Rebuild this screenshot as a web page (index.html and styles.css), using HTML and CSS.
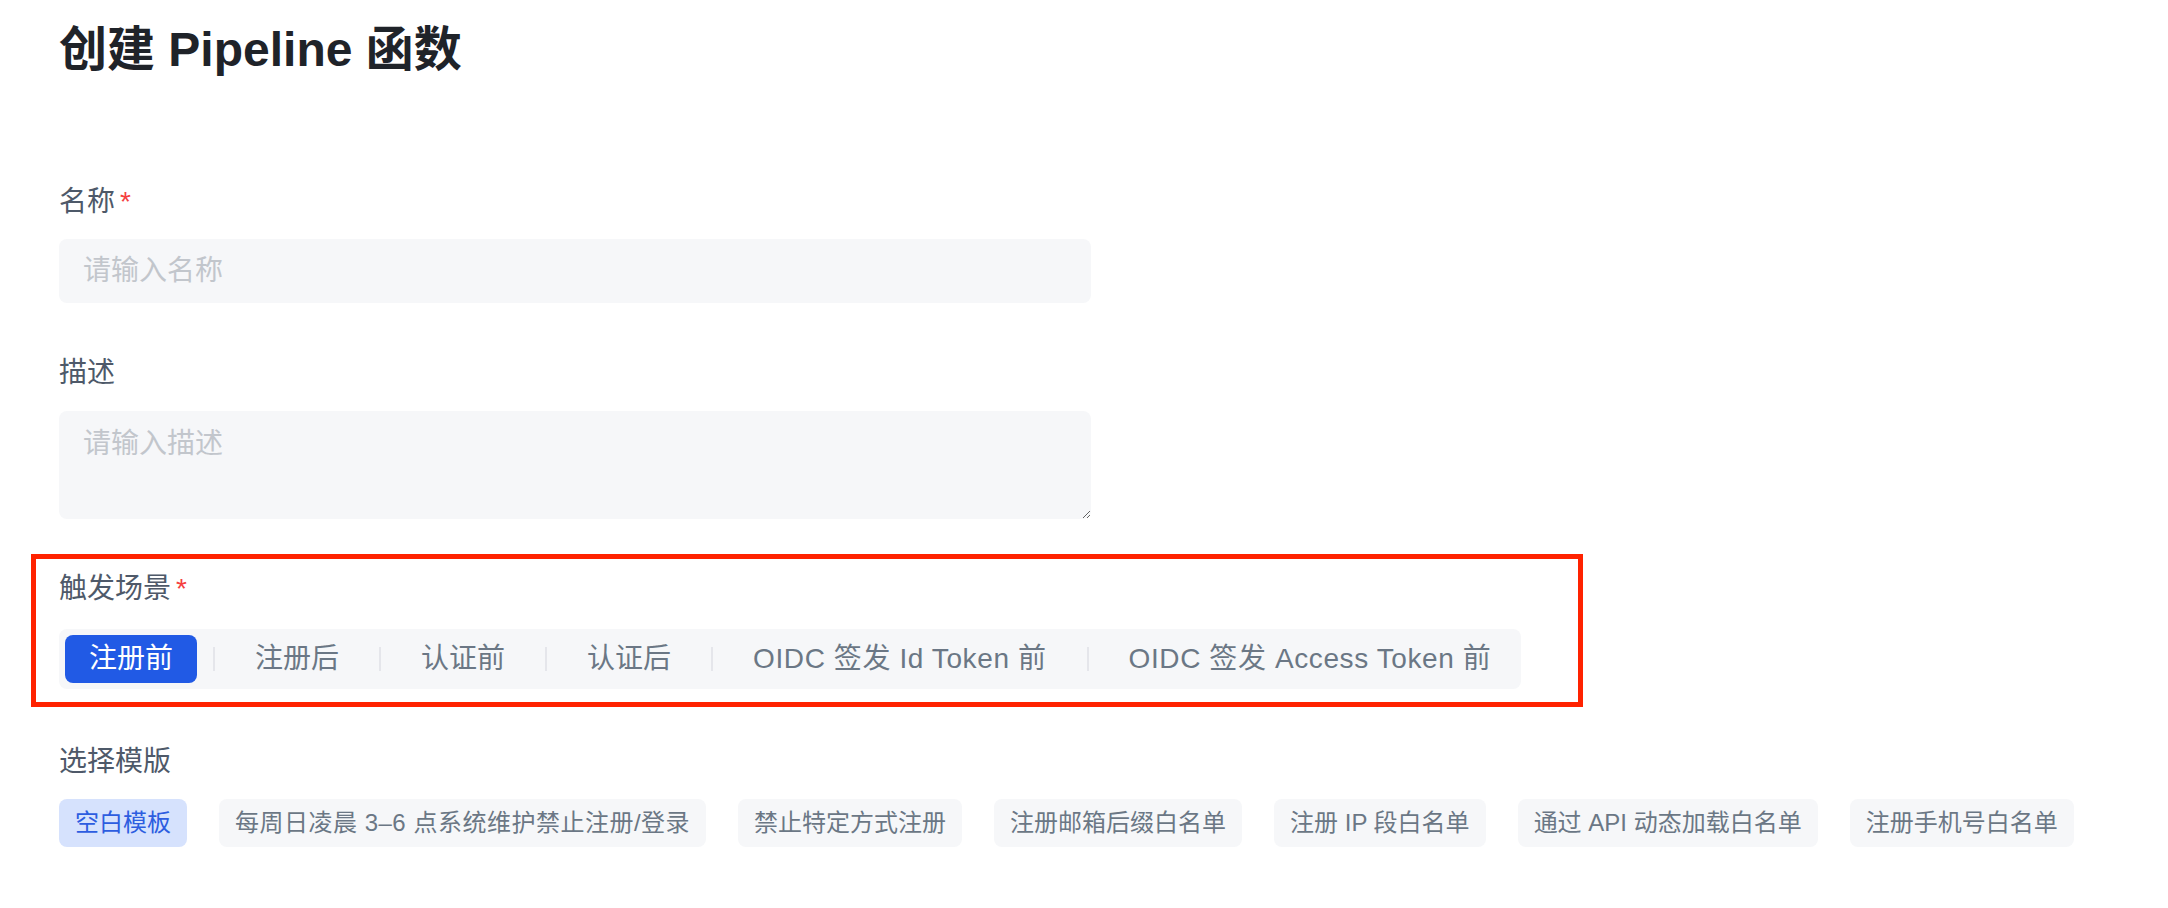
FILE: index.html
```html
<!DOCTYPE html>
<html lang="zh-CN">
<head>
<meta charset="utf-8">
<title>创建 Pipeline 函数</title>
<link rel="stylesheet" href="styles.css">
</head>
<body>
<div class="page">
  <h1 class="title">创建 Pipeline 函数</h1>
  <form class="form">
    <div class="field">
      <label class="label">名称<span class="req">*</span></label>
      <input class="input" type="text" placeholder="请输入名称">
    </div>
    <div class="field field-desc">
      <label class="label">描述</label>
      <textarea class="textarea" placeholder="请输入描述"></textarea>
    </div>
    <div class="highlight">
      <div class="field">
        <label class="label label-trigger">触发场景<span class="req">*</span></label>
        <div class="segmented">
          <div class="seg-item active">注册前</div>
          <div class="seg-sep"></div>
          <div class="seg-item">注册后</div>
          <div class="seg-sep"></div>
          <div class="seg-item">认证前</div>
          <div class="seg-sep"></div>
          <div class="seg-item">认证后</div>
          <div class="seg-sep"></div>
          <div class="seg-item latin">OIDC 签发 Id Token 前</div>
          <div class="seg-sep"></div>
          <div class="seg-item latin">OIDC 签发 Access Token 前</div>
        </div>
      </div>
    </div>
    <div class="field field-template">
      <label class="label">选择模版</label>
      <div class="tags">
        <span class="tag active">空白模板</span>
        <span class="tag tag-wide">每周日凌晨 3–6 点系统维护禁止注册/登录</span>
        <span class="tag">禁止特定方式注册</span>
        <span class="tag">注册邮箱后缀白名单</span>
        <span class="tag">注册 IP 段白名单</span>
        <span class="tag">通过 API 动态加载白名单</span>
        <span class="tag">注册手机号白名单</span>
      </div>
    </div>
  </form>
</div>
</body>
</html>
```
FILE: styles.css
```css
* {
  box-sizing: border-box;
}

html, body {
  margin: 0;
  padding: 0;
  background: #ffffff;
}

body {
  font-family: "Liberation Sans", "Noto Sans CJK SC", sans-serif;
  color: #4e5969;
}

.page {
  padding: 18px 0 0 59px;
}

.title {
  margin: 0;
  font-size: 48px;
  line-height: 64px;
  font-weight: 700;
  color: #1f2329;
}

.form {
  margin-top: 99px;
  display: flex;
  flex-direction: column;
}

.field {
  display: flex;
  flex-direction: column;
  align-items: flex-start;
}

.label {
  font-size: 28px;
  line-height: 42px;
  color: #4e5969;
  margin-bottom: 16px;
}

.req {
  color: #f53f3f;
  margin-left: 5px;
}

.input,
.textarea {
  width: 1032px;
  border: none;
  outline: none;
  background: #f6f7f9;
  border-radius: 8px;
  font-family: "Liberation Sans", "Noto Sans CJK SC", sans-serif;
  font-size: 28px;
  color: #1f2329;
}

.input {
  height: 64px;
  padding: 0 24px;
}

.field-desc {
  margin-top: 49px;
}

.field-desc .label {
  margin-bottom: 17px;
}

.textarea {
  height: 108px;
  padding: 12px 24px;
  line-height: 42px;
  resize: vertical;
  display: block;
}

.input::placeholder,
.textarea::placeholder {
  color: #c2c6cc;
}

.highlight {
  margin-top: 35px;
  margin-left: -28px;
  width: 1552px;
  border: 5px solid #ff2200;
  padding: 9px 0 13px 23px;
}

.label-trigger {
  margin-bottom: 19px;
}

.segmented {
  display: flex;
  align-items: center;
  background: #f6f7f9;
  border-radius: 8px;
  padding: 6px;
}

.seg-item {
  font-size: 28px;
  line-height: 48px;
  padding: 0 24px;
  color: #6b7785;
  border-radius: 8px;
  white-space: nowrap;
}

.seg-item.latin {
  letter-spacing: 0.6px;
}

.seg-item.active {
  background: #215ae5;
  color: #ffffff;
}

.seg-sep {
  width: 2px;
  height: 24px;
  margin: 0 16px;
  background: #e5e6eb;
}

.field-template {
  margin-top: 34px;
}

.tags {
  display: flex;
  gap: 32px;
}

.tag {
  font-size: 24px;
  line-height: 48px;
  padding: 0 16px;
  background: #f6f7f9;
  border-radius: 8px;
  color: #6b7785;
  white-space: nowrap;
}

.tag-wide {
  letter-spacing: 0.5px;
}

.tag.active {
  background: #d6e2fd;
  color: #2d5de0;
}
```
